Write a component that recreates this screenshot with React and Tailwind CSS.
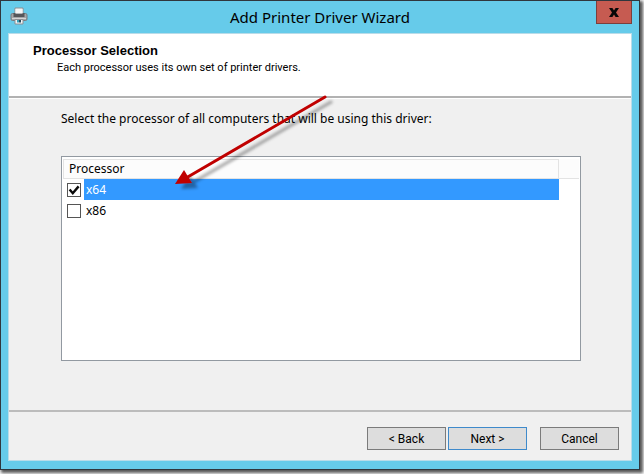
import React, { useState } from "react";

const processors = [
  { id: "x64", checked: true },
  { id: "x86", checked: false },
];

export default function App() {
  const [items, setItems] = useState(processors);
  const [selected, setSelected] = useState("x64");

  function toggle(id) {
    setItems(items.map((p) => (p.id === id ? { ...p, checked: !p.checked } : p)));
  }

  return (
    <div className="h-screen bg-white pr-1 pb-1 font-['Noto_Sans','Open_Sans',sans-serif] text-black">
      <div className="relative flex h-full flex-col border border-[#30363d] bg-[#66cbea] px-[7px] pb-2 shadow-[2px_2px_3px_1px_#555]">
        <TitleBar />
        <main className="flex flex-1 flex-col border border-[#b9dce9] bg-[#f0f0f0]">
          <header className="h-16 border-b-2 border-[#b2b2b2] bg-white pt-[9px] leading-4">
            <h2 className="pl-6 font-['Liberation_Sans',sans-serif] text-[13px] font-bold">Processor Selection</h2>
            <p className="pl-12 font-['Roboto',sans-serif] text-[11px] leading-[18px]">
              Each processor uses its own set of printer drivers.
            </p>
          </header>
          <section className="flex flex-1 flex-col border-t border-white pt-[11px] pr-[50px] pb-[49px] pl-[52px] text-xs">
            <p className="mb-7 leading-[18px]">Select the processor of all computers that will be using this driver:</p>
            <ProcessorList items={items} selected={selected} onToggle={toggle} onSelect={setSelected} />
          </section>
          <footer className="flex justify-end gap-[13px] border-t-2 border-[#bcbcbc] pt-[15px] pr-3 pb-[10px]">
            <div className="flex gap-[2px]">
              <WizardButton>&lt; Back</WizardButton>
              <WizardButton primary>Next &gt;</WizardButton>
            </div>
            <WizardButton>Cancel</WizardButton>
          </footer>
        </main>
        <PointerArrow />
      </div>
    </div>
  );
}

function TitleBar() {
  return (
    <div className="relative flex h-8 shrink-0 items-center justify-center">
      <PrinterIcon />
      <h1 className="text-[15px] leading-8">Add Printer Driver Wizard</h1>
      <button
        type="button"
        aria-label="Close"
        className="absolute top-0 right-0 flex h-[23px] w-9 items-center justify-center border border-t-0 border-[#7c3f3c] bg-[#c65b51]"
      >
        <svg viewBox="0 0 10 9" className="h-[9px] w-[10px]">
          <path d="M0 0h3.4l1.6 2.4L6.6 0H10L7 4.5 10 9H6.6L5 6.6 3.4 9H0l3-4.5z" fill="#080808" />
        </svg>
      </button>
    </div>
  );
}

function ProcessorList({ items, selected, onToggle, onSelect }) {
  return (
    <div className="flex-1 border border-[#9299a1] bg-white px-px pt-[2px]">
      <table className="w-full table-fixed border-separate border-spacing-0 text-left leading-[18px]">
        <thead>
          <tr className="bg-[#fcfcfc]">
            <th className="border border-[#e3e3e3] p-0 pl-[5px] font-normal">Processor</th>
            <th className="w-5 border-b border-[#e3e3e3] p-0" aria-label="Empty" />
          </tr>
        </thead>
        <tbody>
          {items.map((p) => (
            <tr key={p.id}>
              <td className="p-0">
                <div className="flex h-[21px] items-center pl-1">
                  <CheckBox id={p.id} checked={p.checked} onChange={() => onToggle(p.id)} />
                  <label
                    htmlFor={p.id}
                    onClick={() => onSelect(p.id)}
                    className={
                      p.id === selected
                        ? "ml-[3px] flex-1 bg-[#3399ff] pl-[2px] leading-[21px] text-white"
                        : "ml-[3px] flex-1 pl-[2px] leading-[21px]"
                    }
                  >
                    {p.id}
                  </label>
                </div>
              </td>
              <td className="p-0" />
            </tr>
          ))}
        </tbody>
      </table>
    </div>
  );
}

function CheckBox({ id, checked, onChange }) {
  return (
    <span className="relative h-[14px] w-[14px] shrink-0">
      <input
        id={id}
        type="checkbox"
        checked={checked}
        onChange={onChange}
        className="block h-[14px] w-[14px] appearance-none border border-[#555] bg-white"
      />
      {checked && (
        <svg viewBox="0 0 14 14" className="pointer-events-none absolute inset-0 h-[14px] w-[14px]">
          <path d="M2.6 6.4l3.2 3.8L11.6 3.4" fill="none" stroke="#0a0a0a" strokeWidth="2.4" />
        </svg>
      )}
    </span>
  );
}

function WizardButton({ primary, children }) {
  return (
    <button
      type="button"
      className={
        primary
          ? "h-[23px] w-[79px] border border-[#3f8acb] bg-[#dddddd] font-['Roboto',sans-serif] text-xs"
          : "h-[23px] w-[79px] border border-[#7b7b7b] bg-[#dddddd] font-['Roboto',sans-serif] text-xs"
      }
    >
      {children}
    </button>
  );
}

function PrinterIcon() {
  return (
    <svg viewBox="0 0 18 18" className="absolute top-[6px] left-[2px] h-[18px] w-[18px]">
      <path d="M5 1h8v6H5z" fill="#f5f5f5" stroke="#8b8f94" />
      <rect x="1" y="6.5" width="16" height="7" rx="1.5" fill="#a5a6a8" stroke="#77797c" />
      <path d="M3.5 6h2v1h7V6h2v4h-11z" fill="#55565a" />
      <path d="M5.5 2h7v4.5h-7z" fill="#f5f5f5" />
      <path d="M2 11.5h14" stroke="#d5d5d5" />
      <path d="M5 12.5h8v4.5H5z" fill="#f2f6f7" stroke="#8b8f94" />
      <path d="M7 13h2v2.5H7z" fill="#38a3bd" />
      <path d="M9 13h2v2.5H9z" fill="#28495c" />
    </svg>
  );
}

function PointerArrow() {
  return (
    <svg
      viewBox="0 0 170 105"
      aria-hidden="true"
      className="pointer-events-none absolute top-[94px] left-[172px] h-[105px] w-[170px]"
    >
      <defs>
        <filter id="arrow-shadow" x="-10%" y="-10%" width="120%" height="130%">
          <feDropShadow dx="6" dy="5" stdDeviation="1.6" floodColor="#000" floodOpacity="0.35" />
        </filter>
      </defs>
      <g filter="url(#arrow-shadow)">
        <path d="M152 2L13 83" stroke="#c00000" strokeWidth="3" strokeLinecap="round" />
        <path d="M2 89L11 75L19 88z" fill="#c00000" />
      </g>
    </svg>
  );
}
